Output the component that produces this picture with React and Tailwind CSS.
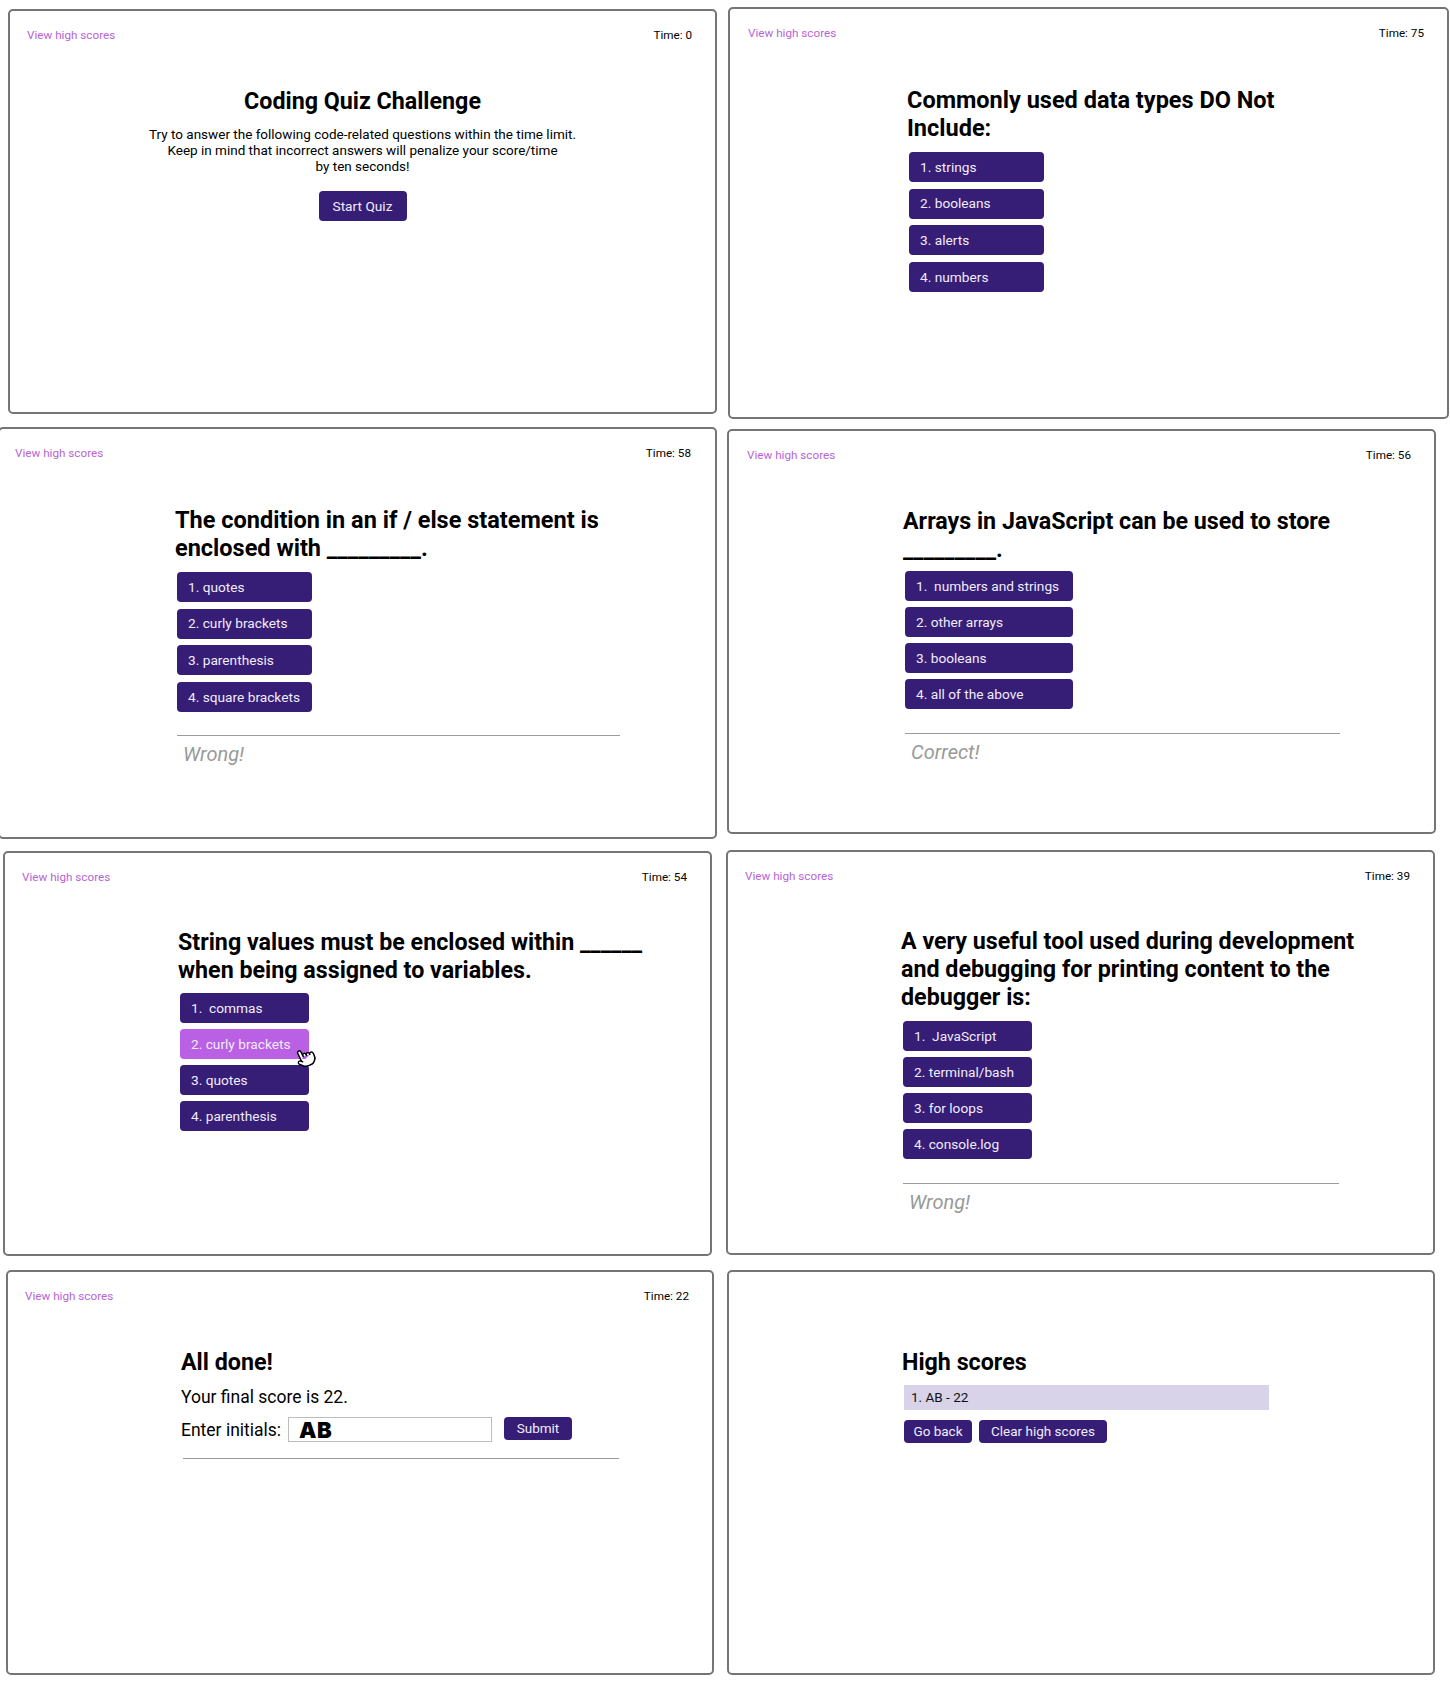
import React from 'react';
import { Pointer } from 'lucide-react';

const Panel = ({ className, children }) => (
  <div className={`border-2 border-[#757575] rounded-[5px] bg-white shrink-0 ${className}`}>{children}</div>
);

const TopBar = ({ time, className = 'pl-[17px] pr-[23px]' }) => (
  <div className={`flex justify-between pt-[16px] text-[11.7px] leading-4 h-[33px] ${className}`}>
    <span className="text-[#b764d6]">View high scores</span>
    <span className="text-black">Time: {time}</span>
  </div>
);

const Answer = ({ className = 'w-[135px]', children }) => (
  <button className={`h-[30px] rounded-[4px] bg-[#361d75] text-[#f1ecfb] text-[13.7px] text-left pl-[11px] whitespace-pre ${className}`}>
    {children}
  </button>
);

const Title = ({ className, size = 'text-[23.25px]', children }) => (
  <h2 className={`${size} leading-[28px] font-bold text-black whitespace-nowrap ${className}`}>{children}</h2>
);

const Question = ({ className, top = 'mt-[44px]', size, title, answers, gap = 'gap-[6.7px]', listTop = 'mt-[11px]', width, feedback, ruleWidth = 'w-[443px]', feedbackTop = 'mt-[23px]' }) => (
  <div className={className}>
    <Title className={top} size={size}>{title}</Title>
    <div className={`${listTop} ml-[2px] flex flex-col ${gap}`}>
      {answers.map((a) => (
        <Answer key={a} className={width}>{a}</Answer>
      ))}
    </div>
    {feedback && (
      <div className={`${feedbackTop} ml-[2px] ${ruleWidth} border-t border-[#9b9b9b]`}>
        <p className="pl-[6px] pt-[4px] text-[20px] leading-[28px] italic text-[#999999]">{feedback}</p>
      </div>
    )}
  </div>
);

const SmallButton = ({ className, children }) => (
  <button className={`rounded-[4px] bg-[#361d75] text-[#f1ecfb] text-[13.5px] text-center ${className}`}>{children}</button>
);

export default function App() {
  return (
    <div className="w-[1450px] h-[1694px] overflow-hidden bg-white font-[Roboto,sans-serif] grid grid-cols-[725px_725px] items-start">
      {/* left column */}
      <div className="flex flex-col">
        <Panel className="mt-[9px] ml-[8px] w-[709px] h-[405px]">
          <TopBar time="0" />
          <div className="flex flex-col items-center">
            <h1 className="mt-[43px] text-[23.25px] leading-[28px] font-bold text-black">Coding Quiz Challenge</h1>
            <p className="mt-[11px] text-[13.5px] leading-[16px] text-center text-black">
              Try to answer the following code-related questions within the time limit.
              <br />
              Keep in mind that incorrect answers will penalize your score/time
              <br />
              by ten seconds!
            </p>
            <Answer className="w-[88px] mt-[17px] !pl-0 !text-center">Start Quiz</Answer>
          </div>
        </Panel>

        <Panel className="mt-[13px] ml-[-2px] w-[719px] h-[412px]">
          <TopBar time="58" className="pl-[15px] pr-[24px]" />
          <Question
            className="ml-[175px]"
            size="text-[23.5px]"
            listTop="mt-[10px]"
            title={<>The condition in an if / else statement is<br />enclosed with _________.</>}
            answers={['1. quotes', '2. curly brackets', '3. parenthesis', '4. square brackets']}
            feedback="Wrong!"
            feedbackTop="mt-[23px]"
          />
        </Panel>

        <Panel className="mt-[12px] ml-[3px] w-[709px] h-[405px]">
          <TopBar time="54" />
          <div className="ml-[173px]">
            <Title className="mt-[42px]">String values must be enclosed within ______<br />when being assigned to variables.</Title>
            <div className="mt-[9px] ml-[2px] flex flex-col gap-[6px]">
              <Answer className="w-[129px]">1.  commas</Answer>
              <div className="relative w-[129px]">
                <Answer className="w-[129px] !bg-[#b960e4]">2. curly brackets</Answer>
                <Pointer size={21} strokeWidth={1.6} className="absolute left-[115px] top-[18px] -rotate-[25deg] fill-white text-black" />
              </div>
              <Answer className="w-[129px]">3. quotes</Answer>
              <Answer className="w-[129px]">4. parenthesis</Answer>
            </div>
          </div>
        </Panel>

        <Panel className="mt-[14px] ml-[6px] w-[708px] h-[405px]">
          <TopBar time="22" />
          <div className="ml-[173px]">
            <Title className="mt-[43px]">All done!</Title>
            <p className="mt-[9px] text-[17.5px] leading-[24px] text-black">Your final score is 22.</p>
            <div className="mt-[8px] flex items-center">
              <span className="w-[107px] text-[17.5px] leading-[24px] text-black">Enter initials:</span>
              <div className="w-[204px] h-[25px] border border-[#bdbdbd] pl-[10px] flex items-center">
                <span className="font-[Inter,sans-serif] font-black text-[22px] tracking-[0.5px] leading-none text-black">AB</span>
              </div>
              <SmallButton className="ml-[12px] w-[68px] h-[23px] -mt-[2px]">Submit</SmallButton>
            </div>
            <div className="mt-[16px] ml-[2px] w-[436px] border-t border-[#9b9b9b]" />
          </div>
        </Panel>
      </div>

      {/* right column */}
      <div className="flex flex-col">
        <Panel className="mt-[7px] ml-[3px] w-[721px] h-[412px]">
          <TopBar time="75" className="pl-[18px] pr-[23px]" />
          <Question
            className="ml-[177px]"
            size="text-[23.5px]"
            listTop="mt-[10px]"
            title={<>Commonly used data types DO Not<br />Include:</>}
            answers={['1. strings', '2. booleans', '3. alerts', '4. numbers']}
          />
        </Panel>

        <Panel className="mt-[10px] ml-[2px] w-[709px] h-[405px]">
          <TopBar time="56" className="pl-[18px] pr-[23px]" />
          <Question
            className="ml-[174px]"
            top="mt-[43px]"
            title={<>Arrays in JavaScript can be used to store<br />_________.</>}
            answers={['1.  numbers and strings', '2. other arrays', '3. booleans', '4. all of the above']}
            width="w-[168px]"
            listTop="mt-[8px]"
            gap="gap-[6px]"
            ruleWidth="w-[435px]"
            feedback="Correct!"
            feedbackTop="mt-[24px]"
          />
        </Panel>

        <Panel className="mt-[16px] ml-[1px] w-[709px] h-[405px]">
          <TopBar time="39" />
          <Question
            className="ml-[173px]"
            top="mt-[42px]"
            title={<>A very useful tool used during development<br />and debugging for printing content to the<br />debugger is:</>}
            answers={['1.  JavaScript', '2. terminal/bash', '3. for loops', '4. console.log']}
            width="w-[129px]"
            gap="gap-[6px]"
            listTop="mt-[10px]"
            ruleWidth="w-[436px]"
            feedback="Wrong!"
            feedbackTop="mt-[24px]"
          />
        </Panel>

        <Panel className="mt-[15px] ml-[2px] w-[708px] h-[405px]">
          <div className="ml-[173px] pt-[76px]">
            <Title>High scores</Title>
            <div className="mt-[9px] ml-[2px] w-[365px] h-[25px] bg-[#d8d3e8] pl-[7px] flex items-center text-[13.5px] text-[#111111]">1. AB - 22</div>
            <div className="mt-[10px] ml-[2px] flex gap-[7px]">
              <SmallButton className="w-[68px] h-[23px]">Go back</SmallButton>
              <SmallButton className="w-[128px] h-[23px]">Clear high scores</SmallButton>
            </div>
          </div>
        </Panel>
      </div>
    </div>
  );
}
